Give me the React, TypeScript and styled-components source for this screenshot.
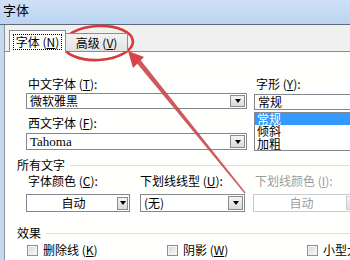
import styled, { createGlobalStyle } from 'styled-components'

const Global = createGlobalStyle`
  html, body { margin: 0; padding: 0; background: #fff; }
  body {
    font-family: "Noto Sans CJK SC", "Noto Sans", sans-serif;
    font-size: 12px;
    color: #000;
  }
`

const Window = styled.div`
  position: relative;
  width: 350px;
  height: 260px;
  overflow: hidden;
  display: flex;
  flex-direction: column;
  background: #f0f0f0;
`

const TitleBar = styled.div`
  flex: none;
  box-sizing: border-box;
  height: 25px;
  padding: 3px 0 0 3px;
  line-height: 14px;
  font-size: 13px;
  background: linear-gradient(#cfe1f5, #bad4f1);
  border-bottom: 1px solid #5d6878;
`

const Client = styled.div`
  flex: 1;
  display: flex;
  flex-direction: column;
  border-left: 4px solid #c4d8ef;
`

const TabStrip = styled.div`
  flex: none;
  height: 26px;
  display: flex;
  align-items: flex-end;
  padding-left: 4px;
  border-left: 1px solid #8d949d;
`

const Tab = styled.div<{ $active?: boolean }>`
  position: relative;
  z-index: 1;
  box-sizing: border-box;
  display: flex;
  align-items: center;
  justify-content: center;
  height: ${p => (p.$active ? 22 : 18)}px;
  width: ${p => (p.$active ? 57 : 62)}px;
  margin-bottom: ${p => (p.$active ? -1 : 0)}px;
  border: 1px solid #898c95;
  border-bottom: none;
  border-left: ${p => (p.$active ? '1px solid #898c95' : 'none')};
  background: ${p => (p.$active ? '#fffffd' : 'linear-gradient(#f3f3f3, #e3e3e3)')};
  line-height: 12px;
`

const Focus = styled.span`
  padding: 1px 2px;
  border: 1px dotted #000;
`

const Panel = styled.div`
  flex: 1;
  box-sizing: border-box;
  padding-left: 21px;
  background: #fffffd;
  border-top: 1px solid #898c95;
  border-left: 1px solid #8d949d;
`

const FontGrid = styled.div`
  display: grid;
  grid-template-columns: 221px 120px;
  column-gap: 7px;
  padding-top: 25px;
`

const Column = styled.div`
  display: flex;
  flex-direction: column;
`

const Label = styled.div<{ $gap?: number; $dim?: boolean; $flush?: boolean }>`
  line-height: 14px;
  padding-left: ${p => (p.$flush ? 0 : 2)}px;
  margin-top: ${p => p.$gap ?? 0}px;
  color: ${p => (p.$dim ? '#9c9c9c' : '#000')};
  white-space: nowrap;
`

const Combo = styled.div<{ $h: number; $gap?: number; $w?: number; $dim?: boolean }>`
  box-sizing: border-box;
  display: flex;
  align-items: center;
  height: ${p => p.$h}px;
  width: ${p => (p.$w ? `${p.$w}px` : 'auto')};
  margin-top: ${p => p.$gap ?? 0}px;
  padding: 0 1px 0 3px;
  background: #fff;
  border: 1px solid ${p => (p.$dim ? '#c6c9ce' : '#828790')};
  color: ${p => (p.$dim ? '#9c9c9c' : '#000')};
  line-height: 12px;
  white-space: nowrap;
`

const ComboText = styled.span<{ $center?: boolean; $serif?: boolean }>`
  flex: 1;
  text-align: ${p => (p.$center ? 'center' : 'left')};
  font-family: ${p => (p.$serif ? '"Liberation Serif", serif' : 'inherit')};
  font-size: ${p => (p.$serif ? 13 : 12)}px;
`

const DropButton = styled.div<{ $w: number; $h: number; $dim?: boolean }>`
  flex: none;
  box-sizing: border-box;
  display: flex;
  align-items: center;
  justify-content: center;
  width: ${p => p.$w}px;
  height: ${p => p.$h}px;
  background: linear-gradient(#f4f4f4, #dadada);
  border: 1px solid ${p => (p.$dim ? '#cfcfcf' : '#8c8c8c')};
  &::after {
    content: '';
    border-left: 3.5px solid transparent;
    border-right: 3.5px solid transparent;
    border-top: 4px solid ${p => (p.$dim ? '#b0b0b0' : '#000')};
  }
`

const ListBox = styled.div`
  box-sizing: border-box;
  display: flex;
  height: 39px;
  margin-top: 2px;
  background: #fff;
  border: 1px solid #828790;
`

const Items = styled.div`
  flex: 1;
  display: flex;
  flex-direction: column;
`

const Item = styled.div<{ $sel?: boolean }>`
  height: 12.4px;
  line-height: 12px;
  font-size: 12px;
  padding-left: 2px;
  margin-right: 2px;
  background: ${p => (p.$sel ? '#3399ff' : 'transparent')};
  color: ${p => (p.$sel ? '#fff' : '#000')};
`

const ScrollBar = styled.div`
  width: 14px;
  display: flex;
  flex-direction: column;
  justify-content: space-around;
  align-items: flex-start;
  padding-left: 3px;
  font-size: 7px;
  line-height: 8px;
  color: #333;
  background: #f4f4f4;
`

const Group = styled.div<{ $gap: number }>`
  display: flex;
  align-items: center;
  margin: ${p => p.$gap}px 0 0 -9px;
  line-height: 14px;
  &::after {
    content: '';
    flex: 1;
    height: 1px;
    margin-left: 5px;
    background: #dcdfe3;
  }
`

const Row = styled.div<{ $gap?: number; $cols: string }>`
  display: grid;
  grid-template-columns: ${p => p.$cols};
  margin-top: ${p => p.$gap ?? 0}px;
`

const Check = styled.label`
  display: flex;
  align-items: center;
  gap: 5px;
  line-height: 14px;
  white-space: nowrap;
  &::before {
    content: '';
    flex: none;
    box-sizing: border-box;
    width: 11px;
    height: 11px;
    margin-left: 1px;
    border: 1px solid #8e8f8f;
    background: linear-gradient(135deg, #d6d6d6, #fbfbfb);
    box-shadow: inset 0 0 0 1px #f4f4f4;
  }
`

const Overlay = styled.svg`
  position: absolute;
  left: 0;
  top: 0;
  pointer-events: none;
`

const K = ({ k }: { k: string }) => (
  <>
    {' ('}
    <u>{k}</u>
    {')'}
  </>
)

export default function App() {
  return (
    <Window>
      <Global />
      <TitleBar>字体</TitleBar>
      <Client>
        <TabStrip>
          <Tab $active>
            <Focus>
              字体<K k="N" />
            </Focus>
          </Tab>
          <Tab>
            <span>
              高级<K k="V" />
            </span>
          </Tab>
        </TabStrip>
        <Panel>
          <FontGrid>
            <Column>
              <Label>
                中文字体<K k="T" />:
              </Label>
              <Combo $h={16} $gap={2}>
                <ComboText>微软雅黑</ComboText>
                <DropButton $w={15} $h={12} />
              </Combo>
              <Label $gap={7}>
                西文字体<K k="F" />:
              </Label>
              <Combo $h={17} $gap={3}>
                <ComboText $serif>Tahoma</ComboText>
                <DropButton $w={15} $h={13} />
              </Combo>
            </Column>
            <Column>
              <Label>
                字形<K k="Y" />:
              </Label>
              <Combo $h={16} $gap={3}>
                <ComboText>常规</ComboText>
              </Combo>
              <ListBox>
                <Items>
                  <Item $sel>常规</Item>
                  <Item>倾斜</Item>
                  <Item>加粗</Item>
                </Items>
                <ScrollBar>
                  <span>▲</span>
                  <span>▼</span>
                </ScrollBar>
              </ListBox>
            </Column>
          </FontGrid>

          <Group $gap={7}>所有文字</Group>
          <Row $gap={2} $cols="114px 113px 1fr">
            <Label>
              字体颜色<K k="C" />:
            </Label>
            <Label $flush>
              下划线线型<K k="U" />:
            </Label>
            <Label $dim>
              下划线颜色<K k="I" />:
            </Label>
          </Row>
          <Row $gap={6} $cols="114px 113px 1fr">
            <Combo $h={18} $w={104}>
              <ComboText $center>自动</ComboText>
              <DropButton $w={11} $h={13} />
            </Combo>
            <Combo $h={18} $w={105}>
              <ComboText>(无)</ComboText>
              <DropButton $w={15} $h={14} />
            </Combo>
            <Combo $h={18} $w={110} $dim>
              <ComboText $center>自动</ComboText>
              <DropButton $w={15} $h={14} $dim />
            </Combo>
          </Row>

          <Group $gap={14}>效果</Group>
          <Row $gap={3} $cols="140px 140px 1fr">
            <Check>
              <span>
                删除线<K k="K" />
              </span>
            </Check>
            <Check>
              <span>
                阴影<K k="W" />
              </span>
            </Check>
            <Check>
              <span>小型大写字母</span>
            </Check>
          </Row>
        </Panel>
      </Client>

      <Overlay width={350} height={260} viewBox="0 0 350 260">
        <ellipse
          cx={98}
          cy={43}
          rx={35}
          ry={17}
          transform="rotate(-3 98 43)"
          fill="none"
          stroke="#d8393d"
          strokeWidth={2.6}
        />
        <polygon points="132.5,58 137,55.5 245.6,192.6 244.6,193.4" fill="#c9474a" opacity={0.9} />
        <polygon points="128,51 144,57 133,68" fill="#d9444b" />
      </Overlay>
    </Window>
  )
}
